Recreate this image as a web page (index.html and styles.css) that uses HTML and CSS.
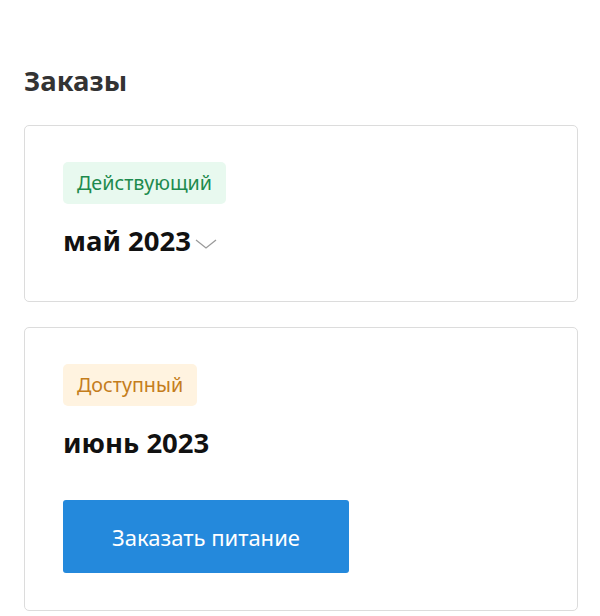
FILE: index.html
```html
<!DOCTYPE html>
<html lang="ru">
<head>
<meta charset="utf-8">
<link rel="stylesheet" href="styles.css">
</head>
<body>
<main class="page">
  <h1 class="title">Заказы</h1>
  <section class="card card-current">
    <span class="badge badge-active">Действующий</span>
    <div class="month">май 2023<svg class="chev" width="24" height="12" viewBox="0 0 24 12"><path d="M2 2 L12 10 L22 2" fill="none" stroke="#9a9a9a" stroke-width="1.3"/></svg></div>
  </section>
  <section class="card card-order">
    <span class="badge badge-avail">Доступный</span>
    <div class="month">июнь 2023</div>
    <button class="btn">Заказать питание</button>
  </section>
</main>
</body>
</html>
```
FILE: styles.css
```css
html, body { margin: 0; padding: 0; background: #fff; }
body { font-family: "Noto Sans", "Open Sans", sans-serif; color: #111; }
.page { padding: 62px 22px 0 24px; display: flex; flex-direction: column; }
.title { margin: 0 0 25px; font-family: "Noto Sans", sans-serif; font-weight: 700; font-size: 27.5px; line-height: 38px; color: #333; }
.card { border: 1px solid #dcdcdc; border-radius: 5px; padding: 36px 38px 42px; margin-bottom: 25px; display: flex; flex-direction: column; align-items: flex-start; }
.card-current { padding-bottom: 43px; }
.card-order { padding-bottom: 37px; }
.badge { display: inline-block; height: 42px; line-height: 42px; padding: 0 14px; border-radius: 5px; font-size: 19.7px; }
.badge-active { background: #e8f9ef; color: #1d8a4d; }
.badge-avail { background: #fff3e0; color: #c47d1c; }
.month { margin-top: 20px; font-size: 27.5px; font-weight: 700; line-height: 34px; color: #111; display: flex; align-items: center; }
.chev { margin-left: 3px; margin-top: 6px; }
.btn { margin-top: 40px; width: 286px; height: 73px; border: 0; border-radius: 3px; background: #2489dc; color: #fff; font-family: inherit; font-size: 22px; }
```
